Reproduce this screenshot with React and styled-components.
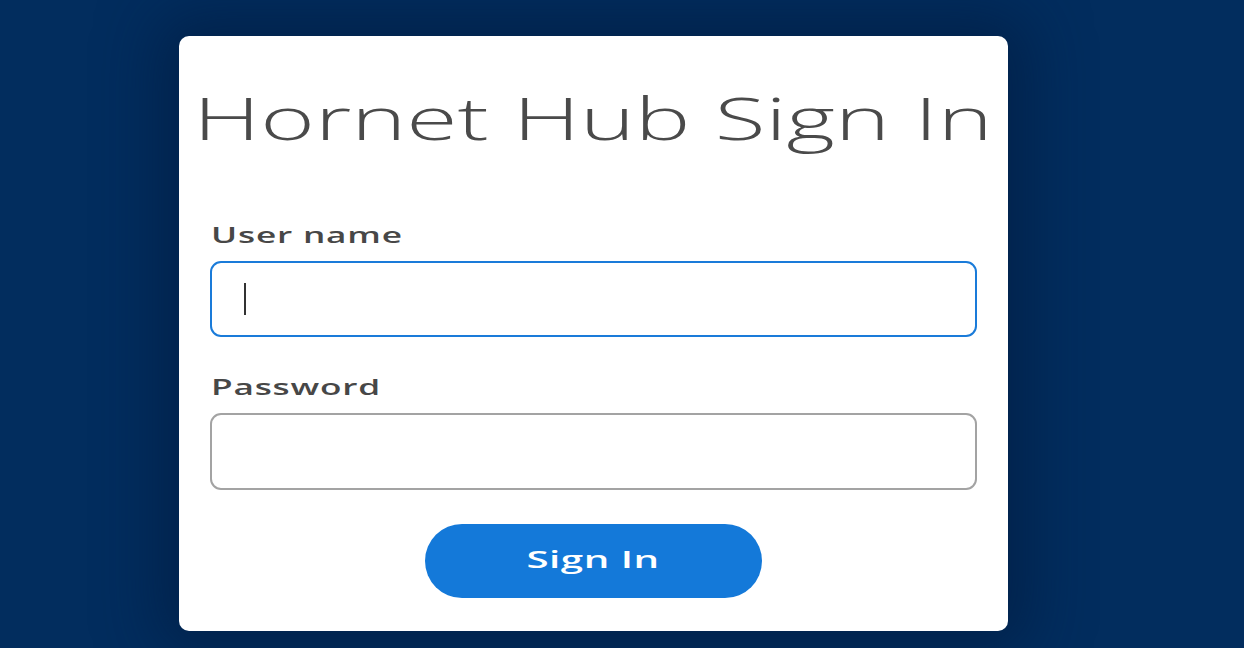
import React from "react";
import styled, { createGlobalStyle } from "styled-components";

const Global = createGlobalStyle`
  html, body { margin: 0; padding: 0; height: 100%; }
  body {
    background: #022d5e;
    font-family: "Open Sans", "Liberation Sans", sans-serif;
    overflow: hidden;
  }
`;

const Page = styled.div`
  width: 1244px;
  height: 648px;
  box-sizing: border-box;
  padding: 36px 0 0 179px;
  background: #022d5e;
`;

const Card = styled.form`
  width: 829px;
  height: 595px;
  box-sizing: border-box;
  background: #fff;
  border-radius: 10px;
  box-shadow: 0 0 60px 20px rgba(1, 25, 60, 0.55);
  padding: 41px 31px 0 31px;
  display: flex;
  flex-direction: column;
`;

const Title = styled.h1`
  margin: 0;
  display: flex;
  justify-content: center;
  font-weight: 300;
  font-size: 59px;
  line-height: 80px;
  color: #4a4a4a;
  white-space: nowrap;
`;

const Stretch = styled.span`
  display: inline-block;
  transform: scaleX(${(p) => p.$x});
  transform-origin: ${(p) => p.$origin || "center"};
  letter-spacing: ${(p) => p.$ls || 0}px;
`;

const Field = styled.div`
  display: flex;
  flex-direction: column;
  align-items: flex-start;
  margin-top: ${(p) => p.$top}px;
`;

const Label = styled.label`
  font-weight: 600;
  font-size: 22px;
  line-height: 28px;
  color: #474747;
  padding-left: 1px;
  margin-bottom: 13px;
`;

const Input = styled.div`
  align-self: stretch;
  height: ${(p) => p.$h}px;
  box-sizing: border-box;
  border: 2px solid ${(p) => (p.$focused ? "#1a7bd9" : "#a3a3a3")};
  border-radius: 11px;
  display: flex;
  align-items: center;
  padding-left: 32px;
`;

const Caret = styled.span`
  width: 2px;
  height: 32px;
  background: #333;
`;

const Button = styled.button`
  align-self: center;
  margin-top: 34px;
  width: 337px;
  height: 74px;
  padding: 0 0 4px;
  border: none;
  border-radius: 37px;
  background: #1479d9;
  color: #fff;
  font-family: "Open Sans", "Liberation Sans", sans-serif;
  font-weight: 600;
  font-size: 23px;
  cursor: pointer;
`;

export default function App() {
  return (
    <>
      <Global />
      <Page>
        <Card onSubmit={(e) => e.preventDefault()}>
          <Title>
            <Stretch $x={1.58}>Hornet Hub Sign In</Stretch>
          </Title>
          <Field $top={63}>
            <Label>
              <Stretch $x={1.6} $ls={0.5} $origin="left">User name</Stretch>
            </Label>
            <Input $focused $h={76}>
              <Caret />
            </Input>
          </Field>
          <Field $top={35}>
            <Label>
              <Stretch $x={1.6} $ls={0.5} $origin="left">Password</Stretch>
            </Label>
            <Input $h={77} />
          </Field>
          <Button type="button">
            <Stretch $x={1.75} $ls={0.3}>Sign In</Stretch>
          </Button>
        </Card>
      </Page>
    </>
  );
}
